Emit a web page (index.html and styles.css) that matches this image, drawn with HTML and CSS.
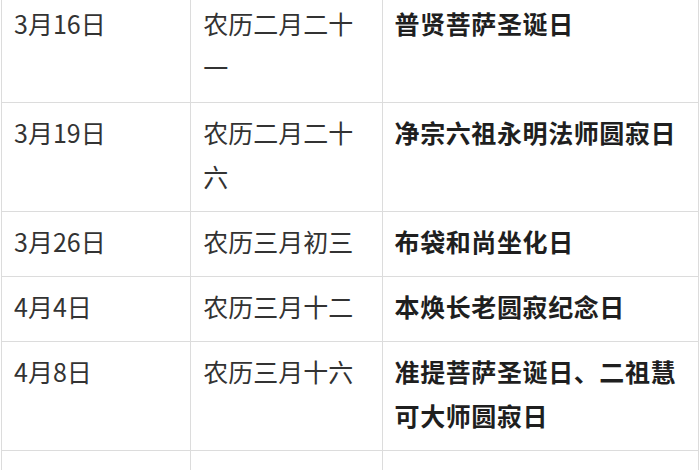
FILE: index.html
```html
<!DOCTYPE html>
<html lang="zh-CN">
<head>
<meta charset="utf-8">
<title>佛教节日</title>
<link rel="stylesheet" href="styles.css">
</head>
<body>
<table class="fest">
  <colgroup>
    <col class="c-date">
    <col class="c-lunar">
    <col class="c-name">
  </colgroup>
  <tbody>
    <tr><td>3月16日</td><td>农历二月二十一</td><td class="name">普贤菩萨圣诞日</td></tr>
    <tr><td>3月19日</td><td>农历二月二十六</td><td class="name">净宗六祖永明法师圆寂日</td></tr>
    <tr><td>3月26日</td><td>农历三月初三</td><td class="name">布袋和尚坐化日</td></tr>
    <tr><td>4月4日</td><td>农历三月十二</td><td class="name">本焕长老圆寂纪念日</td></tr>
    <tr><td>4月8日</td><td>农历三月十六</td><td class="name">准提菩萨圣诞日、二祖慧可大师圆寂日</td></tr>
    <tr class="next"><td></td><td></td><td class="name"></td></tr>
  </tbody>
</table>
</body>
</html>
```

FILE: styles.css
```css
html, body {
  margin: 0;
  padding: 0;
  background: #ffffff;
  overflow: hidden;
}
.fest {
  border-collapse: collapse;
  table-layout: fixed;
  width: 698px;
  margin: -7px 0 0 1px;
  font-family: "Noto Sans CJK SC", "Noto Sans", sans-serif;
  font-size: 25px;
  line-height: 44px;
  color: #333333;
}
.c-date { width: 189px; }
.c-lunar { width: 191px; }
.c-name { width: 316px; }
.fest td {
  border: 1px solid #dcdcdc;
  padding: 7px 12px 13px 12px;
  vertical-align: top;
  word-break: break-all;
}
.fest td.name {
  font-weight: bold;
  color: #1f1f1f;
  letter-spacing: 0.6px;
}
.fest tr.next td {
  height: 44px;
}
```
